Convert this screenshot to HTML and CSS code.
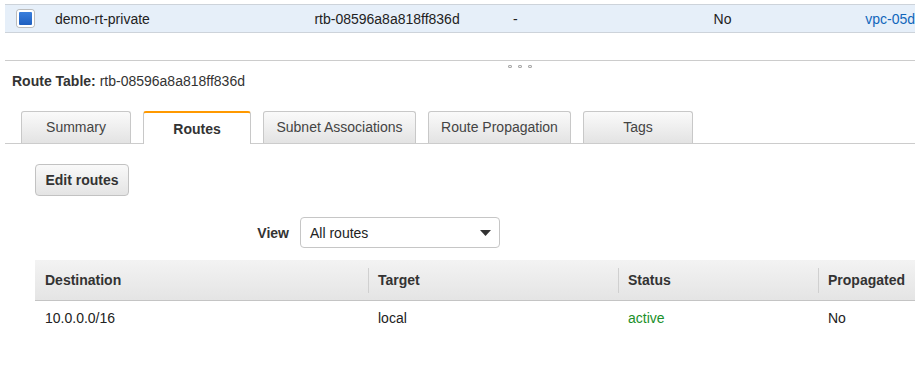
FILE: index.html
```html
<!DOCTYPE html>
<html lang="en">
    <head>
        <meta charset="UTF-8" />
        <meta name="viewport" content="width=device-width, initial-scale=1.0" />
        <title>Route Tables</title>
        <link rel="stylesheet" href="styles.css">
    </head>
    <body>
        <div class="list-row">
            <div class="cell cell-check"><span class="checkbox"></span></div>
            <div class="cell cell-name">demo-rt-private</div>
            <div class="cell cell-id">rtb-08596a8a818ff836d</div>
            <div class="cell cell-assoc">-</div>
            <div class="cell cell-main">No</div>
            <div class="cell cell-vpc"><a href="#">vpc-05d</a></div>
        </div>
        <div class="splitter"></div>
        <div class="grip"><span></span><span></span><span></span></div>

        <div class="detail-title"><b>Route Table:</b> rtb-08596a8a818ff836d</div>

        <div class="tabs">
            <div class="tab">Summary</div>
            <div class="tab active">Routes</div>
            <div class="tab">Subnet Associations</div>
            <div class="tab">Route Propagation</div>
            <div class="tab">Tags</div>
        </div>

        <div class="panel">
            <button class="btn">Edit routes</button>
            <div class="view-row">
                <label class="view-label">View</label>
                <div class="select">
                    <span>All routes</span>
                    <svg width="11" height="6" viewBox="0 0 11 6"><path d="M0 0h11L5.5 6z" fill="#333"/></svg>
                </div>
            </div>
            <table class="routes">
                <thead>
                    <tr>
                        <th class="col-dest">Destination</th>
                        <th class="col-target">Target</th>
                        <th class="col-status">Status</th>
                        <th class="col-prop">Propagated</th>
                    </tr>
                </thead>
                <tbody>
                    <tr>
                        <td>10.0.0.0/16</td>
                        <td>local</td>
                        <td class="status-active">active</td>
                        <td>No</td>
                    </tr>
                </tbody>
            </table>
        </div>
    </body>
</html>
```

FILE: styles.css
```css
html {
    overflow: hidden;
}
body {
    font-family: "Liberation Sans", Arial, sans-serif;
    font-size: 14px;
    color: #222;
    margin: 0;
    background: #fff;
}
.list-row {
    display: flex;
    align-items: center;
    margin: 4px 0 0 5px;
    height: 27px;
    background: #e6eff9;
    border-top: 1px solid #cdd3da;
    border-bottom: 1px solid #cdd3da;
}
.cell {
    white-space: nowrap;
}
.cell-check {
    width: 50px;
    padding-left: 12px;
    box-sizing: border-box;
    display: flex;
    align-items: center;
}
.checkbox {
    display: inline-block;
    width: 13px;
    height: 13px;
    border-radius: 3px;
    background: linear-gradient(#3a7fdc, #1f5fc0);
    border: 2px solid #fff;
    box-shadow: 0 0 0 1px #bcbcbc;
}
.cell-name {
    width: 260px;
}
.cell-id {
    width: 199px;
}
.cell-assoc {
    width: 201px;
}
.cell-main {
    width: 152px;
}
.cell-vpc a {
    color: #1166bb;
    text-decoration: none;
}
.splitter {
    margin-left: 5px;
    height: 27px;
    border-bottom: 1px solid #ccc;
}
.grip {
    display: flex;
    gap: 6px;
    padding: 4px 0 0 508px;
    height: 5px;
}
.grip span {
    width: 2px;
    height: 1px;
    border: 1px solid #aaa;
    border-radius: 1px;
    background: #eee;
}
.detail-title {
    padding-left: 12px;
    line-height: 20px;
    margin-top: 1px;
    font-size: 14px;
    color: #333;
}
.tabs {
    display: flex;
    gap: 12px;
    margin: 20px 0 0 5px;
    padding-left: 16px;
    border-bottom: 1px solid #ccc;
    height: 32px;
}
.tab {
    height: 32px;
    box-sizing: border-box;
    padding-top: 7px;
    text-align: center;
    border: 1px solid #c8c8c8;
    border-bottom: none;
    border-radius: 3px 3px 0 0;
    background: linear-gradient(#fafafa, #e3e3e3);
    color: #444;
}
.tab:nth-child(1) { width: 110px; }
.tab:nth-child(2) { width: 108px; }
.tab:nth-child(3) { width: 153px; }
.tab:nth-child(4) { width: 143px; }
.tab:nth-child(5) { width: 110px; }
.tab.active {
    background: #fff;
    border-top: 2px solid #f90;
    font-weight: bold;
    height: 33px;
    padding-top: 8px;
    color: #333;
}
.panel {
    padding-left: 35px;
}
.btn {
    display: block;
    margin-top: 20px;
    height: 32px;
    width: 94px;
    padding: 0;
    font-family: inherit;
    font-size: 14px;
    font-weight: bold;
    color: #333;
    border: 1px solid #c2c2c2;
    border-radius: 4px;
    background: linear-gradient(#f9f9f9, #e4e4e4);
}
.view-row {
    display: flex;
    align-items: center;
    gap: 11px;
    margin-top: 21px;
}
.view-label {
    width: 254px;
    text-align: right;
    font-weight: bold;
    color: #333;
}
.select {
    width: 200px;
    height: 31px;
    box-sizing: border-box;
    border: 1px solid #c6c6c6;
    border-radius: 4px;
    display: flex;
    align-items: center;
    justify-content: space-between;
    padding: 0 8px 0 9px;
    color: #222;
}
.routes {
    margin-top: 12px;
    width: 880px;
    border-collapse: collapse;
    table-layout: fixed;
}
.routes thead tr {
    background: linear-gradient(#f3f3f3, #e4e4e4);
}
.routes th {
    height: 40px;
    text-align: left;
    padding: 0 10px;
    color: #333;
    border-bottom: 1px solid #c4c4c4;
    background: linear-gradient(#d0d0d0, #d0d0d0) left center / 1px 25px no-repeat;
}
.routes th.col-dest {
    background: none;
}
.col-dest { width: 313px; }
.col-target { width: 230px; }
.col-status { width: 180px; }
.routes td {
    height: 33px;
    padding: 0 10px;
    color: #222;
}
.routes td.status-active {
    color: #1a8f2a;
}
```
